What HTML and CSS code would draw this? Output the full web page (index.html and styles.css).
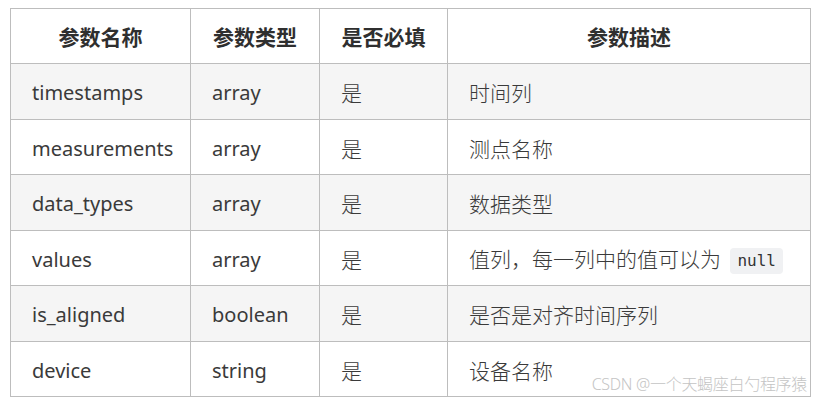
FILE: index.html
```html
<!DOCTYPE html>
<html lang="zh">
<head>
<meta charset="utf-8">
<title>参数表</title>
<link rel="stylesheet" href="styles.css">
</head>
<body>
<div class="wrap">
<table class="params">
  <colgroup>
    <col class="c1"><col class="c2"><col class="c3"><col class="c4">
  </colgroup>
  <thead>
    <tr><th>参数名称</th><th>参数类型</th><th>是否必填</th><th>参数描述</th></tr>
  </thead>
  <tbody>
    <tr><td>timestamps</td><td>array</td><td class="zh">是</td><td class="zh">时间列</td></tr>
    <tr><td>measurements</td><td>array</td><td class="zh">是</td><td class="zh">测点名称</td></tr>
    <tr><td>data_types</td><td>array</td><td class="zh">是</td><td class="zh">数据类型</td></tr>
    <tr><td>values</td><td>array</td><td class="zh">是</td><td class="zh">值列，每一列中的值可以为 <code class="chip">null</code></td></tr>
    <tr><td>is_aligned</td><td>boolean</td><td class="zh">是</td><td class="zh">是否是对齐时间序列</td></tr>
    <tr><td>device</td><td>string</td><td class="zh">是</td><td class="zh">设备名称</td></tr>
  </tbody>
</table>
<div class="watermark">CSDN @一个天蝎座白勺程序猿</div>
</div>
</body>
</html>
```

FILE: styles.css
```css
html, body {
  background: #ffffff;
}
body {
  margin: 8px 0 0 10px;
  font-family: "Noto Sans", "Noto Sans CJK SC", sans-serif;
  color: #333333;
}
.wrap {
  position: relative;
  width: 800px;
}
.params {
  border-collapse: collapse;
  table-layout: fixed;
  width: 800px;
  font-size: 20px;
}
.c1 { width: 180px; }
.c2 { width: 129px; }
.c3 { width: 128px; }
.c4 { width: 363px; }
.params th,
.params td {
  border: 1px solid #bdbdbd;
  height: 55.5px;
  padding: 4px 0 0 21px;
  box-sizing: border-box;
  vertical-align: middle;
  text-align: left;
  white-space: nowrap;
  line-height: 26px;
}
.params th {
  height: 55px;
  font-size: 21px;
  font-weight: bold;
  text-align: center;
  padding: 1px 0 0 0;
  color: #2f2f2f;
}
.params tbody tr:nth-child(odd) {
  background: #f5f5f5;
}
.params tbody td {
  color: #3a3a3a;
}
.params td.zh {
  font-size: 21px;
  font-weight: 300;
}
.chip {
  display: inline-block;
  font-family: "DejaVu Sans Mono", "Liberation Mono", monospace;
  font-size: 16px;
  font-weight: normal;
  line-height: 26px;
  padding: 0 7px;
  margin-left: 4px;
  background: #f0f1f3;
  border-radius: 4px;
  color: #333;
  vertical-align: 1px;
}
.watermark {
  position: absolute;
  right: 3px;
  bottom: 2px;
  font-size: 16px;
  font-weight: 300;
  color: #c4c4c4;
  font-family: "Noto Sans", "Noto Sans CJK SC", sans-serif;
  letter-spacing: -0.3px;
}
```
